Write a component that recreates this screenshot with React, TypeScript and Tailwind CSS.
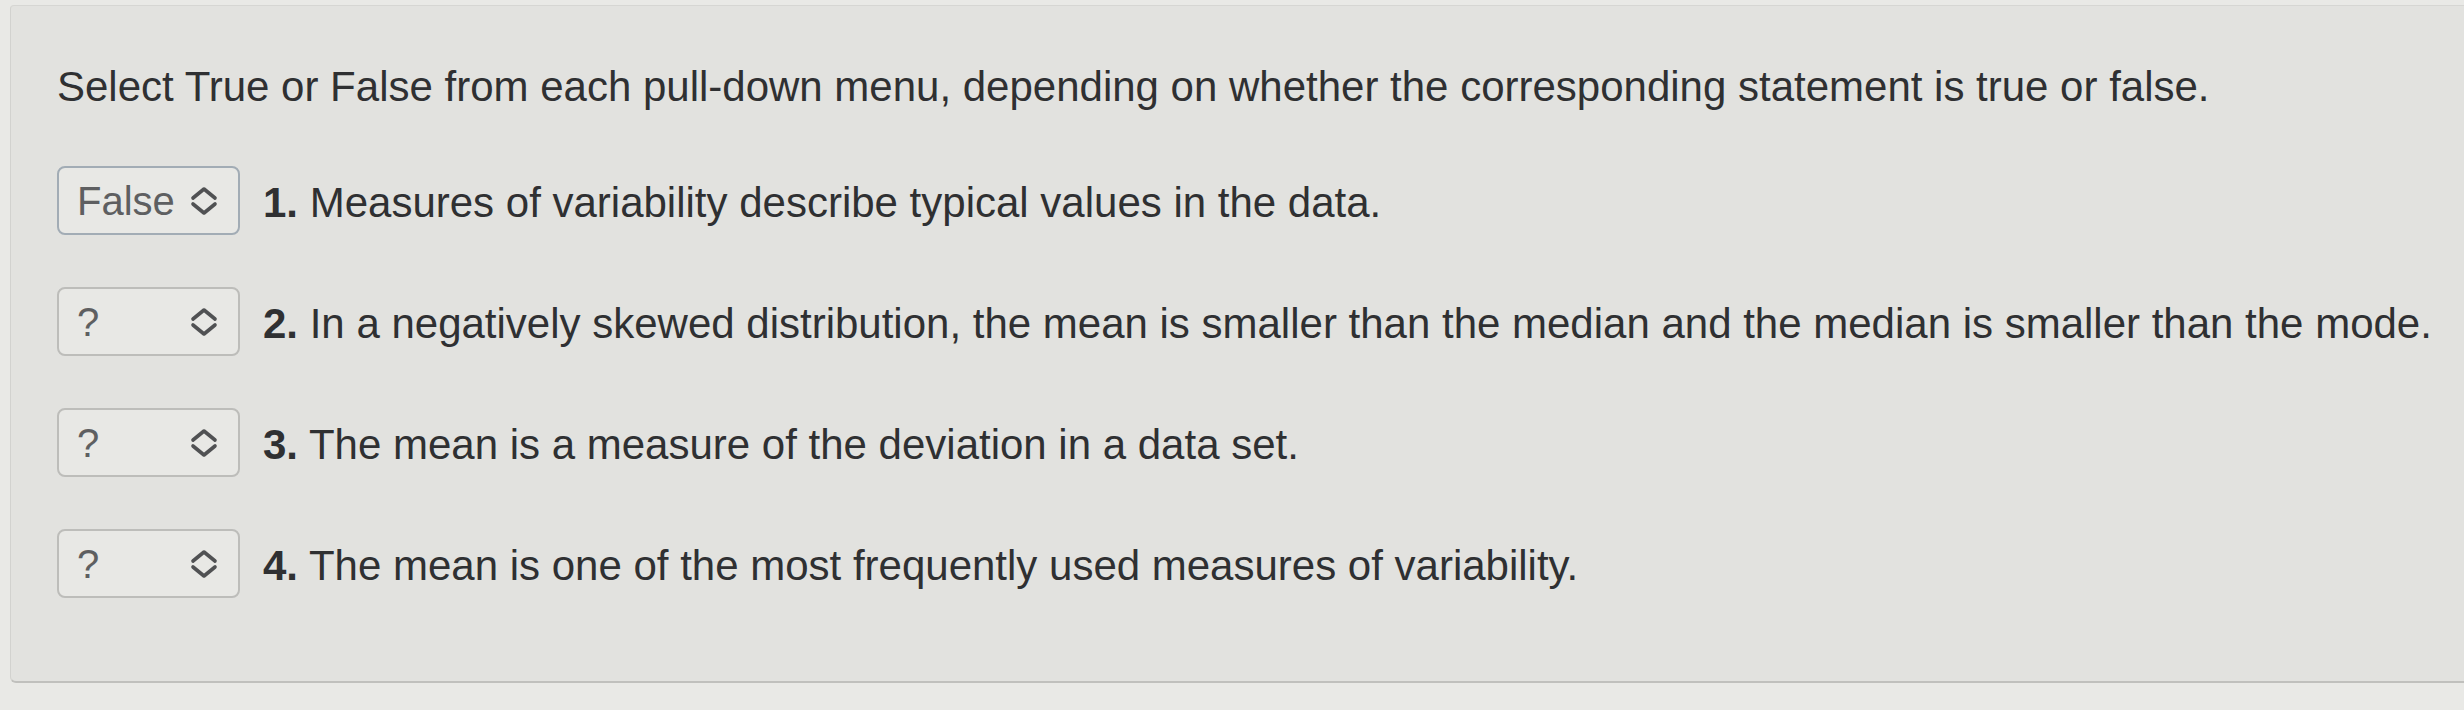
const items = [
  { value: 'False', num: '1.', text: 'Measures of variability describe typical values in the data.', active: true },
  { value: '?', num: '2.', text: 'In a negatively skewed distribution, the mean is smaller than the median and the median is smaller than the mode.' },
  { value: '?', num: '3.', text: 'The mean is a measure of the deviation in a data set.' },
  { value: '?', num: '4.', text: 'The mean is one of the most frequently used measures of variability.' },
];

function UpDown() {
  return (
    <svg width="28" height="30" viewBox="0 0 28 30" fill="none" className="shrink-0">
      <path d="M3 12 L14 3 L25 12" stroke="#505153" strokeWidth="3.6" strokeLinecap="round" strokeLinejoin="round" />
      <path d="M3 18 L14 27 L25 18" stroke="#505153" strokeWidth="3.6" strokeLinecap="round" strokeLinejoin="round" />
    </svg>
  );
}

function Picker({ value, active }: { value: string; active?: boolean }) {
  return (
    <div
      className={`flex h-[69px] w-[183px] shrink-0 items-center justify-between rounded-[8px] border-2 bg-[#e8e8e5] pl-[18px] pr-[20px] ${
        active ? 'border-[#a2acb5]' : 'border-[#bdbdba]'
      }`}
    >
      <span className="text-[40px] leading-none text-[#5e5f61]">{value}</span>
      <UpDown />
    </div>
  );
}

export default function App() {
  return (
    <div className="h-[710px] w-[2464px] overflow-hidden bg-[#e9e9e6] pl-[10px] pt-[5px] font-['Liberation_Sans',Arial,sans-serif]">
      <div className="h-[678px] rounded-tl-[4px] rounded-bl-[6px] border-t border-l border-b-2 border-t-[#d6d6d3] border-l-[#d2d2cf] border-b-[#c0c0bd] bg-[#e2e2df] pl-[46px] pt-[60px]">
        <p className="text-[42px] leading-none text-[#2f3032] whitespace-nowrap">
          Select True or False from each pull-down menu, depending on whether the corresponding statement is true or false.
        </p>
        <div className="mt-[58px] flex flex-col gap-[52px]">
          {items.map((it) => (
            <div key={it.num} className="flex items-center gap-[23px]">
              <Picker value={it.value} active={it.active} />
              <span className="whitespace-nowrap pt-[4px] text-[42px] leading-none text-[#2f3032]">
                <span className="font-bold">{it.num}</span> {it.text}
              </span>
            </div>
          ))}
        </div>
      </div>
    </div>
  );
}
